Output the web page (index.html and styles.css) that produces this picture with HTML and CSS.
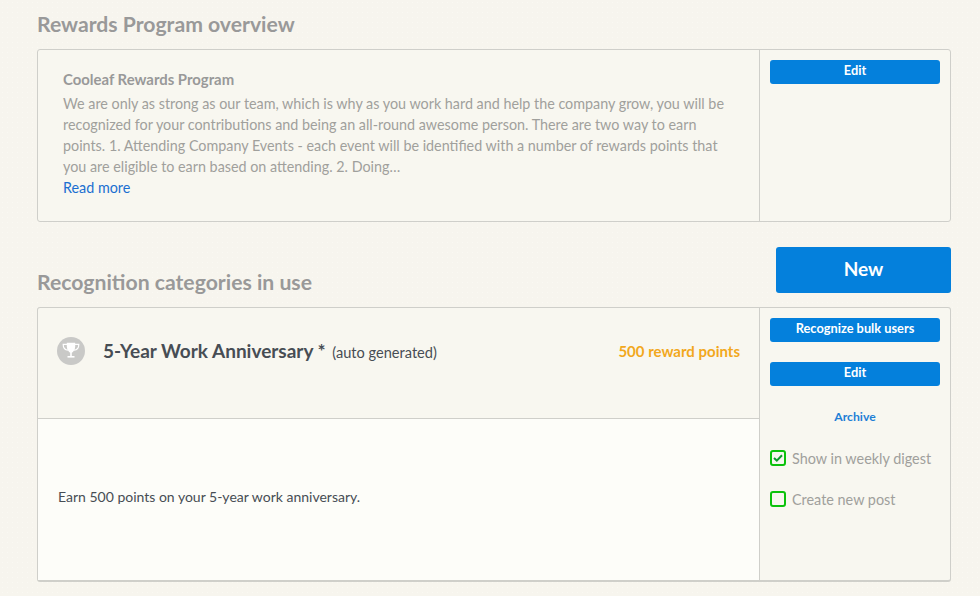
FILE: index.html
```html
<!DOCTYPE html>
<html lang="en">
<head>
<meta charset="utf-8">
<title>Rewards Program</title>
<link rel="stylesheet" href="styles.css">
</head>
<body>
<main class="page">
  <section class="overview">
    <h2 class="section-title">Rewards Program overview</h2>
    <div class="panel panel-overview">
      <div class="overview-main">
        <h3 class="program-name">Cooleaf Rewards Program</h3>
        <p class="program-text">We are only as strong as our team, which is why as you work hard and help the company grow, you will be<br>recognized for your contributions and being an all-round awesome person. There are two way to earn<br>points. 1. Attending Company Events - each event will be identified with a number of rewards points that<br>you are eligible to earn based on attending. 2. Doing…</p>
        <a class="read-more" href="#">Read more</a>
      </div>
      <aside class="overview-side">
        <a class="btn btn-small" href="#">Edit</a>
      </aside>
    </div>
  </section>
  <section class="categories">
    <div class="categories-head">
      <h2 class="section-title">Recognition categories in use</h2>
      <a class="btn btn-new" href="#">New</a>
    </div>
    <div class="panel panel-category">
      <div class="category-main">
        <header class="category-header">
          <span class="trophy">
            <svg width="18" height="18" viewBox="0 0 18 18" aria-hidden="true">
              <path d="M4.800 .8h8.400v3.600c0 3.400-2 5.500-3.400 6.300V14h-1.600v-3.300C7 9.900 4.800 7.800 4.800 4.400z" fill="#fff"/>
              <path d="M5 2.400H1.200c0 3.400 1.800 5.400 4.800 5.800M13 2.400h3.800c0 3.400-1.800 5.400-4.800 5.800" fill="none" stroke="#fff" stroke-width="1.200"/>
              <path d="M5.500 14h7v1.600h-7z" fill="#fff"/>
            </svg>
          </span>
          <h3 class="category-name">5-Year Work Anniversary * <span class="auto">(auto generated)</span></h3>
          <span class="points">500 reward points</span>
        </header>
        <div class="category-body">
          <p>Earn 500 points on your 5-year work anniversary.</p>
        </div>
      </div>
      <aside class="category-side">
        <a class="btn btn-small" href="#">Recognize bulk users</a>
        <a class="btn btn-small" href="#">Edit</a>
        <a class="archive" href="#">Archive</a>
        <div class="check-row">
          <span class="check">
            <svg width="10" height="8" viewBox="0 0 10 8" aria-hidden="true"><path d="M1 4l2.800 2.600L9 1.200" fill="none" stroke="#0a9a2a" stroke-width="2"/></svg>
          </span>
          <span>Show in weekly digest</span>
        </div>
        <div class="check-row">
          <span class="check"></span>
          <span>Create new post</span>
        </div>
      </aside>
    </div>
  </section>
</main>
</body>
</html>
```
FILE: styles.css
```css
* { box-sizing: border-box; }
html, body { margin: 0; height: 100%; }
body {
  background-color: #f7f5ee;
  background-image: radial-gradient(#faf9f3 0.6px, transparent 0.8px);
  background-size: 5px 5px;
  font-family: "Lato", "Open Sans", sans-serif;
  color: #999;
  overflow: hidden;
}
.page { width: 914px; margin-left: 37px; padding-top: 12px; }
.section-title {
  margin: 0;
  font-size: 21.2px;
  line-height: 25px;
  font-weight: 700;
  color: #999;
}
.panel {
  display: flex;
  border: 1px solid #cfcfca;
  border-radius: 3px;
  background: #f8f7f0;
}
.panel-overview { margin-top: 12px; height: 173px; }
.overview-main { flex: 1; padding: 20px 25px 0; }
.program-name { margin: 0; font-size: 14.9px; line-height: 18px; font-weight: 700; color: #999; }
.program-text { margin: 5px 0 0; font-size: 14.33px; line-height: 21px; color: #a0a09c; }
.read-more { display: block; font-size: 14.33px; line-height: 21px; color: #1b6fd1; text-decoration: none; }
.overview-side { width: 191px; flex: none; border-left: 1px solid #cfcfca; padding: 10px; }
.btn {
  display: block;
  background: #0480dc;
  color: #fff;
  text-align: center;
  text-decoration: none;
  font-weight: 700;
  border-radius: 3px;
}
.btn-small { height: 24px; font-size: 12.8px; line-height: 21px; }
.btn-new { width: 175px; height: 46px; font-size: 19px; line-height: 44px; }
.categories { margin-top: 25px; }
.categories-head { display: flex; justify-content: space-between; align-items: flex-end; }
.categories-head .section-title { line-height: 26px; margin-bottom: -2px; }
.panel-category { margin-top: 14px; height: 275px; border-bottom-width: 2px; }
.category-main { flex: 1; display: flex; flex-direction: column; }
.category-header {
  height: 111px;
  display: flex;
  align-items: flex-start;
  padding: 29px 19px 0;
  border-bottom: 1px solid #cfcfca;
}
.trophy {
  width: 28px;
  height: 28px;
  border-radius: 50%;
  background: #c9c9c7;
  display: flex;
  align-items: center;
  justify-content: center;
  margin-right: 18px;
  flex: none;
}
.category-name {
  flex: 1;
  margin: 0;
  font-size: 19px;
  line-height: 28px;
  font-weight: 700;
  color: #474d54;
}
.auto { font-size: 14.6px; font-weight: 400; color: #474d54; margin-left: 2px; }
.points { font-size: 15px; line-height: 28px; font-weight: 700; color: #f2a81d; }
.category-body {
  flex: 1;
  display: flex;
  align-items: center;
  padding: 0 20px 6px;
  background: #fdfdf9;
  font-size: 14px;
  color: #474d54;
}
.category-body p { margin: 0; }
.category-side {
  width: 191px;
  flex: none;
  border-left: 1px solid #cfcfca;
  padding: 10px 10px 0;
  display: flex;
  flex-direction: column;
}
.category-side .btn + .btn { margin-top: 20px; }
.archive {
  margin-top: 23px;
  text-align: center;
  font-size: 12.2px;
  line-height: 16px;
  font-weight: 700;
  color: #1f7fd6;
  text-decoration: none;
}
.check-row {
  display: flex;
  align-items: center;
  gap: 6px;
  height: 20px;
  font-size: 14.4px;
  color: #a0a09c;
}
.archive + .check-row { margin-top: 23px; }
.check-row + .check-row { margin-top: 21px; }
.check {
  width: 16px;
  height: 16px;
  border: 2px solid #0cc20c;
  border-radius: 3px;
  display: flex;
  align-items: center;
  justify-content: center;
  flex: none;
}
```
